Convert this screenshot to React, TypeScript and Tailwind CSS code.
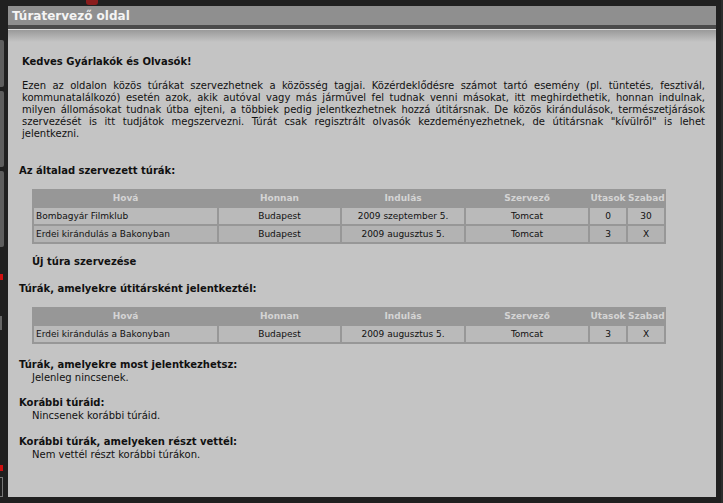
import React from "react";

const font = { fontFamily: '"DejaVu Sans", Verdana, sans-serif' };

type Row = { hova: string; honnan: string; indulas: string; szervezo: string; utasok: string; szabad: string };

function TourTable({ rows }: { rows: Row[] }) {
  const rowBg = ["bg-[#bababa]", "bg-[#b3b3b3]"];
  return (
    <table className="w-[634px] table-fixed border-separate border-spacing-[2px] bg-[#979797] text-[9px] leading-none text-[#111]">
      <colgroup>
        <col className="w-[183px]" />
        <col className="w-[121px]" />
        <col className="w-[122px]" />
        <col className="w-[122px]" />
        <col className="w-[36px]" />
        <col className="w-[36px]" />
      </colgroup>
      <thead>
        <tr className="h-[15px] font-bold text-[#d4d4d4]">
          <th className="p-0 text-center">Hová</th>
          <th className="p-0 text-center">Honnan</th>
          <th className="p-0 text-center">Indulás</th>
          <th className="p-0 text-center">Szervező</th>
          <th className="p-0 text-center">Utasok</th>
          <th className="p-0 text-center">Szabad</th>
        </tr>
      </thead>
      <tbody>
        {rows.map((r, i) => (
          <tr key={i} className={`h-[16px] ${rowBg[i % 2]}`}>
            <td className="p-0 pl-[2px] text-left whitespace-nowrap">{r.hova}</td>
            <td className="p-0 text-center">{r.honnan}</td>
            <td className="p-0 text-center">{r.indulas}</td>
            <td className="p-0 text-center">{r.szervezo}</td>
            <td className="p-0 text-center">{r.utasok}</td>
            <td className="p-0 text-center">{r.szabad}</td>
          </tr>
        ))}
      </tbody>
    </table>
  );
}

const paraLines = [
  "Ezen az oldalon közös túrákat szervezhetnek a közösség tagjai. Közérdeklődésre számot tartó esemény (pl. tüntetés, fesztivál,",
  "kommunatalálkozó) esetén azok, akik autóval vagy más járművel fel tudnak venni másokat, itt meghirdethetik, honnan indulnak,",
  "milyen állomásokat tudnak útba ejteni, a többiek pedig jelentkezhetnek hozzá útitársnak. De közös kirándulások, természetjárások",
  "szervezését is itt tudjátok megszervezni. Túrát csak regisztrált olvasók kezdeményezhetnek, de útitársnak \"kívülről\" is lehet",
];

export default function App() {
  const t1: Row[] = [
    { hova: "Bombagyár Filmklub", honnan: "Budapest", indulas: "2009 szeptember 5.", szervezo: "Tomcat", utasok: "0", szabad: "30" },
    { hova: "Erdei kirándulás a Bakonyban", honnan: "Budapest", indulas: "2009 augusztus 5.", szervezo: "Tomcat", utasok: "3", szabad: "X" },
  ];
  const t2: Row[] = [
    { hova: "Erdei kirándulás a Bakonyban", honnan: "Budapest", indulas: "2009 augusztus 5.", szervezo: "Tomcat", utasok: "3", szabad: "X" },
  ];

  return (
    <div className="flex h-[503px] w-[723px] overflow-hidden bg-[#202020]" style={font}>
      {/* left decorative strip */}
      <div className="flex w-[8px] flex-col">
        <div className="h-[40px]" />
        <div className="h-[47px] w-[4px] rounded-r-[2px] bg-[#5e5e5e]" />
        <div className="h-[4px]" />
        <div className="h-[76px] w-[4px] rounded-r-[2px] bg-[#5e5e5e]" />
        <div className="h-[4px]" />
        <div className="h-[76px] w-[4px] rounded-r-[2px] bg-[#5e5e5e]" />
        <div className="h-[27px]" />
        <div className="h-[6px] w-[3px] bg-[#d01010]" />
        <div className="h-[36px]" />
        <div className="h-[14px] w-[2px] bg-[#666]" />
        <div className="h-[135px]" />
        <div className="h-[6px] w-[3px] bg-[#d01010]" />
        <div className="h-[6px]" />
        <div className="h-[20px] w-[3px] border border-l-0 border-[#777]" />
      </div>

      {/* main panel */}
      <div className="flex w-[708px] flex-col">
        <div className="relative h-[6px]">
          <div className="absolute left-[78px] top-0 h-[5px] w-[12px] rounded-b-[3px] bg-[#8a1c1c]" />
        </div>
        <div className="flex h-[19px] items-center bg-[#8f8f8f] pl-[4px]">
          <span className="text-[12px] font-bold leading-none text-[#f4f4f4]">Túratervező oldal</span>
        </div>
        <div className="h-[4px] bg-[#4b4b4b]" />
        <div className="h-[1px] bg-[#dcdcdc]" />
        <div className="flex h-[467px] flex-col bg-[linear-gradient(to_bottom,#9a9a9a,#c4c4c4_12px)] text-[10px] text-[#111]">
          <div className="ml-[14px] mt-[25px] text-[10px] font-bold leading-[13px]">Kedves Gyárlakók és Olvasók!</div>
          <div className="ml-[14px] mr-[11px] mt-[12px] leading-[12px]">
            {paraLines.map((l, i) => (
              <div key={i} className="text-justify [text-align-last:justify] whitespace-nowrap">
                {l}
              </div>
            ))}
            <div>jelentkezni.</div>
          </div>

          <div className="ml-[11px] mt-[24px] font-bold leading-[13px]">Az általad szervezett túrák:</div>
          <div className="ml-[24px] mt-[12px]">
            <TourTable rows={t1} />
          </div>
          <div className="ml-[24px] mt-[11px] font-bold leading-[13px]">Új túra szervezése</div>

          <div className="ml-[11px] mt-[14px] font-bold leading-[13px]">Túrák, amelyekre útitársként jelentkeztél:</div>
          <div className="ml-[24px] mt-[12px]">
            <TourTable rows={t2} />
          </div>

          <div className="ml-[11px] mt-[14px] font-bold leading-[13px]">Túrák, amelyekre most jelentkezhetsz:</div>
          <div className="ml-[24px] leading-[13px]">Jelenleg nincsenek.</div>

          <div className="ml-[11px] mt-[12px] font-bold leading-[13px]">Korábbi túráid:</div>
          <div className="ml-[24px] leading-[13px]">Nincsenek korábbi túráid.</div>

          <div className="ml-[11px] mt-[13px] font-bold leading-[13px]">Korábbi túrák, amelyeken részt vettél:</div>
          <div className="ml-[24px] leading-[13px]">Nem vettél részt korábbi túrákon.</div>
        </div>
        <div className="flex-1" />
      </div>

      {/* right strip */}
      <div className="flex w-[7px] justify-end">
        <div className="h-full w-[2px] bg-[#2c2c2c]" />
      </div>
    </div>
  );
}
